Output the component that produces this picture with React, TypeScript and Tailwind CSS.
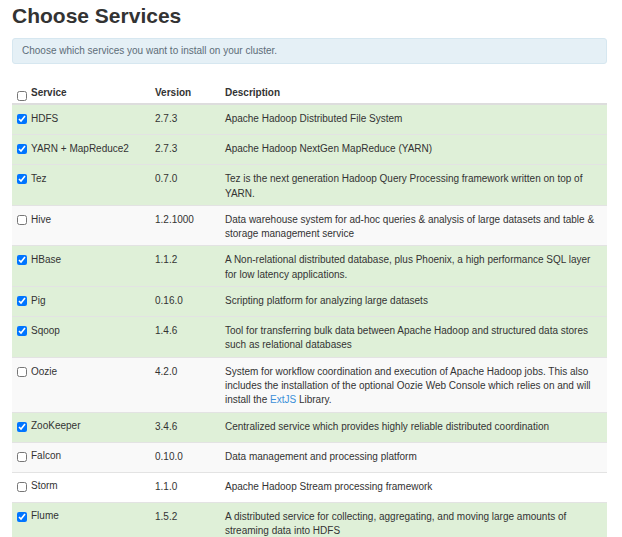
import type { ReactNode } from 'react'

interface Service {
  name: string
  version: string
  desc: ReactNode
  checked: boolean
  bg: string
}

const services: Service[] = [
  { name: 'HDFS', version: '2.7.3', desc: 'Apache Hadoop Distributed File System', checked: true, bg: 'bg-[#dff0d8]' },
  { name: 'YARN + MapReduce2', version: '2.7.3', desc: 'Apache Hadoop NextGen MapReduce (YARN)', checked: true, bg: 'bg-[#dff0d8]' },
  { name: 'Tez', version: '0.7.0', desc: 'Tez is the next generation Hadoop Query Processing framework written on top of YARN.', checked: true, bg: 'bg-[#dff0d8]' },
  { name: 'Hive', version: '1.2.1000', desc: 'Data warehouse system for ad-hoc queries & analysis of large datasets and table & storage management service', checked: false, bg: 'bg-[#f9f9f9]' },
  { name: 'HBase', version: '1.1.2', desc: 'A Non-relational distributed database, plus Phoenix, a high performance SQL layer for low latency applications.', checked: true, bg: 'bg-[#dff0d8]' },
  { name: 'Pig', version: '0.16.0', desc: 'Scripting platform for analyzing large datasets', checked: true, bg: 'bg-[#dff0d8]' },
  { name: 'Sqoop', version: '1.4.6', desc: 'Tool for transferring bulk data between Apache Hadoop and structured data stores such as relational databases', checked: true, bg: 'bg-[#dff0d8]' },
  {
    name: 'Oozie',
    version: '4.2.0',
    desc: (
      <>
        System for workflow coordination and execution of Apache Hadoop jobs. This also includes the installation of the optional Oozie Web Console which relies on and will install the{' '}
        <a className="text-[#3a8fd8]">ExtJS</a> Library.
      </>
    ),
    checked: false,
    bg: 'bg-[#f9f9f9]',
  },
  { name: 'ZooKeeper', version: '3.4.6', desc: 'Centralized service which provides highly reliable distributed coordination', checked: true, bg: 'bg-[#dff0d8]' },
  { name: 'Falcon', version: '0.10.0', desc: 'Data management and processing platform', checked: false, bg: 'bg-[#f9f9f9]' },
  { name: 'Storm', version: '1.1.0', desc: 'Apache Hadoop Stream processing framework', checked: false, bg: 'bg-white' },
  { name: 'Flume', version: '1.5.2', desc: 'A distributed service for collecting, aggregating, and moving large amounts of streaming data into HDFS', checked: true, bg: 'bg-[#dff0d8]' },
]

export default function App() {
  return (
    <div className="min-h-[537px] bg-white pl-[12px] pr-[15px] text-[#333] font-['Liberation_Sans',Arial,sans-serif]">
      <h2 className="pt-[4px] text-[21px] leading-[23px] font-bold text-[#333]">Choose Services</h2>

      <div className="mt-[11px] rounded-[3px] border border-[#d6e7f0] bg-[#e5f0f6] px-[9px] py-[5px] text-[10px] leading-[14px] text-[#5d6d78]">
        Choose which services you want to install on your cluster.
      </div>

      <table className="mt-[15px] w-[595px] border-collapse text-[10px] leading-[14.3px]">
        <colgroup>
          <col className="w-[138px]" />
          <col className="w-[70px]" />
          <col />
        </colgroup>
        <thead>
          <tr className="border-b-2 border-[#ddd] text-left font-bold">
            <th className="px-[5px] pt-[7px] pb-[3px] align-top">
              <div className="flex h-[14px] items-center gap-[4px]">
                <input type="checkbox" className="m-0 mt-[5px] h-[10px] w-[10px]" readOnly />
                <span>Service</span>
              </div>
            </th>
            <th className="px-[5px] pt-[7px] pb-[3px] align-top">Version</th>
            <th className="px-[5px] pt-[7px] pb-[3px] align-top">Description</th>
          </tr>
        </thead>
        <tbody>
          {services.map((s) => (
            <tr key={s.name} className={`border-t border-[#e3e3e3] ${s.bg}`}>
              <td className="px-[5px] pt-[7px] pb-[4px] align-top">
                <div className="mb-[4px] flex h-[14px] items-center gap-[4px]">
                  <input type="checkbox" checked={s.checked} readOnly className="m-0 h-[10px] w-[10px]" />
                  <span>{s.name}</span>
                </div>
              </td>
              <td className="px-[5px] pt-[7px] pb-[4px] align-top">{s.version}</td>
              <td className="px-[5px] pt-[7px] pb-[4px] align-top">{s.desc}</td>
            </tr>
          ))}
        </tbody>
      </table>
    </div>
  )
}
